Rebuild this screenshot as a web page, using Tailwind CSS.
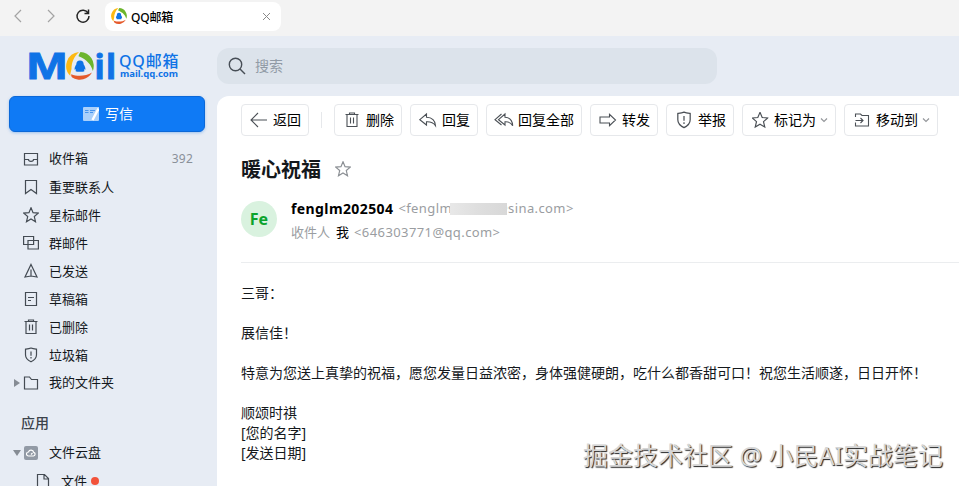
<!DOCTYPE html>
<html lang="zh-CN">
<head>
    <meta charset="UTF-8">
    <meta name="viewport" content="width=device-width, initial-scale=1.0">
    <title>QQ邮箱</title>
    <script src="https://cdn.jsdelivr.net/npm/@tailwindcss/browser@4"></script>
</head>
<body class="h-screen overflow-hidden bg-[#e7ecf4] font-['Noto_Sans','Noto_Sans_CJK_SC',sans-serif] text-[#14181c]">

    <!-- Shared icons -->
    <svg class="hidden">
        <symbol id="ring" viewBox="0 0 28 28">
            <path fill="#fdb913" d="M13 0A14 14 0 0 0 4.500 24C4 22 5 19.500 5.500 17C5.500 11 7.500 5 13 0Z"/>
            <path fill="#6cb52d" d="M14.500 0A14 14 0 0 1 26.800 19C25.500 13 21 7.500 12.500 4.200C13 2.500 13.500 1.500 14.500 0Z"/>
            <path fill="#e55a2b" d="M26 20.500A14 14 0 0 1 6.200 25.600C5.500 25 5 23.500 5.200 22.200C12 25 20 24 26 20.500Z"/>
            <path fill="#0f73e6" d="M14 8.500C11.500 8.500 10.300 10 10.300 12.600C9.300 14 8.600 15.500 8.600 17.200C8.600 18.200 9.200 18 9.800 17.100C10 18.300 9.600 18.700 9.600 19.200C11 20 17 20 18.400 19.200C18.400 18.700 18 18.300 18.200 17.100C18.800 18 19.400 18.200 19.400 17.200C19.400 15.500 18.700 14 17.700 12.600C17.700 10 16.500 8.500 14 8.500Z"/>
        </symbol>
        <symbol id="star" viewBox="0 0 16 16">
            <path d="M8 .8l2.050 4.850 5.250.45-4 3.450 1.200 5.100L8 11.950l-4.500 2.700 1.200-5.100-4-3.450 5.250-.45z"/>
        </symbol>
        <symbol id="trash" viewBox="0 0 16 16">
            <path d="M1.500 2.500h13M5.500 2.500v-1.500h5v1.500M3 2.500v12h10v-12M6.500 5.500v6M9.500 5.500v6"/>
        </symbol>
        <symbol id="shield" viewBox="0 0 16 16">
            <path d="M8 1c2 .8 4 1 5.500 1.200v5.500c0 3.300-2.300 5.500-5.500 7.100-3.200-1.600-5.500-3.800-5.500-7.100V2.200C4 2 6 1.800 8 1zM8 4.500v4.200M8 10v1.500"/>
        </symbol>
    </svg>

    <!-- Browser bar -->
    <div class="h-9 bg-[#f3f3f3] flex items-start">
        <div class="flex w-[105px] h-8 items-center pl-2.5 gap-[17px]">
            <svg class="w-4 h-4" viewBox="0 0 16 16" fill="none" stroke="#a3a3a3" stroke-width="1.200"><path d="M11 2L5 8l6 6"/></svg>
            <svg class="w-4 h-4" viewBox="0 0 16 16" fill="none" stroke="#a3a3a3" stroke-width="1.200"><path d="M5 2l6 6-6 6"/></svg>
            <svg class="w-4 h-4 -ml-px" viewBox="0 0 16 16" fill="none" stroke="#222" stroke-width="1.500"><path d="M13.200 5.200A6 6 0 1 0 14 8M13.500 1.500v4h-4"/></svg>
        </div>
        <div class="mt-0.5 w-44 h-[29px] bg-white rounded-lg flex items-center pl-1.5 pr-2.5">
            <svg class="w-4 h-4 -mt-0.5"><use href="#ring"/></svg>
            <span class="ml-1 text-xs font-medium text-black tracking-[-0.2px] pt-0.5">QQ邮箱</span>
            <svg class="ml-auto w-[9px] h-[9px]" viewBox="0 0 9 9" stroke="#8a8a8a" stroke-width="1"><path d="M1 1l7 7M8 1L1 8"/></svg>
        </div>
    </div>

    <div class="flex h-[450px]">
        <!-- Sidebar -->
        <aside class="w-[217px] shrink-0">
            <div class="h-[60px] pl-7 pt-3.5 flex text-[#0f73e6]">
                <svg class="w-[91px] h-8 overflow-visible" viewBox="0 0 91 32" fill="#0f73e6" stroke="#0f73e6" stroke-width=".8">
                    <text x="-1.500" y="29" font-family="Liberation Sans" font-weight="bold" font-size="36" textLength="41" lengthAdjust="spacingAndGlyphs">M</text>
                    <use href="#ring" x="38" y="2" width="28" height="28" stroke="none"/>
                    <text x="66.500 78" y="29" font-family="Noto Sans" font-weight="bold" font-size="34">il</text>
                </svg>
                <div class="pt-[3px] whitespace-nowrap">
                    <div class="text-base leading-4 font-medium tracking-[0.8px]">QQ邮箱</div>
                    <div class="ml-[1px] text-[9.500px] leading-[10px] font-bold">mail.qq.com</div>
                </div>
            </div>
            <div class="ml-[9px] w-[196px] h-9 rounded-md bg-[#0f7af5] border border-[#0b68d8] shadow-[0_1px_3px_rgba(15,115,230,0.35)] flex items-center justify-center gap-1.5 pl-0.5 text-sm text-white">
                <svg class="w-4 h-4" viewBox="0 0 16 16">
                    <path fill="#a9d0fb" d="M1 1h15v13a1 1 0 0 1-1 1H1a1 1 0 0 1-1-1V2a1 1 0 0 1 1-1z"/>
                    <path stroke="#4795ee" d="M2 4.500h3.500M2 6.500h3.500M7 4.500h5M7 6.500h3"/>
                    <path stroke="#fff" stroke-width="2.400" d="M15.500 2.500L9.500 14"/>
                </svg>
                <span>写信</span>
            </div>

            <nav class="pt-[13px] text-[13px] [&_svg]:w-4 [&_svg]:h-4 [&_svg]:shrink-0 [&_svg]:fill-none [&_svg]:stroke-[#444b53] [&_svg]:stroke-[1.2]">
                <div class="flex items-center h-7 pl-[23px] gap-2.5">
                    <svg viewBox="0 0 16 16"><path d="M1.500 2.500h13v11.500h-13zM1.500 8.500h4c0 2.500 5 2.500 5 0h4"/></svg>
                    <span>收件箱</span>
                    <span class="ml-auto mr-6 text-[#8a9099] text-xs tracking-[0.2px]">392</span>
                </div>
                <div class="flex items-center h-7 pl-[23px] gap-2.5">
                    <svg viewBox="0 0 16 16"><path d="M2.500 1.500h11v13L8 10.500l-5.500 4z"/></svg>
                    <span class="pt-px">重要联系人</span>
                </div>
                <div class="flex items-center h-7 pl-[23px] gap-2.5">
                    <svg><use href="#star"/></svg>
                    <span class="pt-px">星标邮件</span>
                </div>
                <div class="flex items-center h-7 pl-[23px] gap-2.5">
                    <svg viewBox="0 0 16 16"><path d="M.6 1.500h10v8h-10zM5 5.500h10.400v8.500H5z"/></svg>
                    <span class="pt-px">群邮件</span>
                </div>
                <div class="flex items-center h-7 pl-[23px] gap-2.5">
                    <svg viewBox="0 0 16 16"><path d="M8 1.500l6 12.500-6-1-6 1zM8 6.500v6.500"/></svg>
                    <span class="pt-px">已发送</span>
                </div>
                <div class="flex items-center h-7 pl-[23px] gap-2.5">
                    <svg viewBox="0 0 16 16"><path d="M2.500 1.500h11v13h-11zM5 6.500h6M5 9.500h3"/></svg>
                    <span class="pt-px">草稿箱</span>
                </div>
                <div class="flex items-center h-7 pl-[23px] gap-2.5">
                    <svg><use href="#trash"/></svg>
                    <span class="pt-px">已删除</span>
                </div>
                <div class="flex items-center h-7 pl-[23px] gap-2.5">
                    <svg><use href="#shield"/></svg>
                    <span class="pt-px">垃圾箱</span>
                </div>
                <div class="flex items-center h-7 pl-3.5">
                    <span class="w-0 h-0 mr-[3px] border-y-4 border-y-transparent border-l-[6px] border-l-[#868c94]"></span>
                    <svg viewBox="0 0 16 16"><path d="M1.500 2h5l2 2.500h6V14h-13z"/></svg>
                    <span class="ml-2.5">我的文件夹</span>
                </div>
                <div class="mt-3 h-7 leading-7 pl-[21px] text-sm font-medium text-[#3c434b]">应用</div>
                <div class="flex items-center h-7 mt-0.5 pl-[13px]">
                    <span class="w-0 h-0 mr-0.5 border-x-4 border-x-transparent border-t-[6px] border-t-[#868c94]"></span>
                    <span class="w-3.5 h-3.5 m-[1px] rounded-xs bg-[#929aa5] flex items-center justify-center">
                        <svg class="!w-2.5 !h-2.5 !stroke-white" viewBox="0 0 10 10"><path d="M2.500 8a2 2 0 0 1 0-4 2.700 2.700 0 0 1 5.200.3A1.900 1.900 0 0 1 7.500 8zM5 6.500L6.500 5"/></svg>
                    </span>
                    <span class="ml-2.5">文件云盘</span>
                </div>
                <div class="flex items-center h-7 pl-[35px] gap-2.5">
                    <svg viewBox="0 0 16 16"><path d="M2.500 1.500h7l4 4v9h-11zM9 1.500v4.500h4.500"/></svg>
                    <span class="leading-3">文件</span>
                    <span class="w-2 h-2 -ml-1.5 rounded-full bg-[#f2523a]"></span>
                </div>
            </nav>
        </aside>

        <main class="flex-1 min-w-0 flex flex-col">
            <div class="mt-3 w-[500px] h-9 rounded-xl bg-[#dce3eb] flex items-center pl-[11px] gap-[9px] text-sm text-[#919ba6]">
                <svg class="w-[18px] h-[18px]" viewBox="0 0 18 18" fill="none" stroke="#474e56" stroke-width="1.400"><circle cx="7.500" cy="7.500" r="6.200"/><path d="M12 12l5 5"/></svg>
                <span>搜索</span>
            </div>

            <section class="mt-3 flex-1 bg-white rounded-tl-xl pl-6 pt-2">
                <!-- Toolbar -->
                <div class="flex gap-2 text-sm text-black whitespace-nowrap [&>button]:h-8 [&>button]:px-[7px] [&>button]:flex [&>button]:items-center [&>button]:gap-1 [&>button]:border [&>button]:border-[#e6e8eb] [&>button]:rounded [&_svg]:fill-none [&_svg]:stroke-[#4b5056] [&_svg]:stroke-[1.1]">
                    <button>
                        <svg class="w-5 h-5" viewBox="0 0 20 20"><path d="M18 10H2M9 3l-7 7 7 7"/></svg>
                        <span>返回</span>
                    </button>
                    <div class="w-px h-4 mt-2 mx-1 bg-[#e6e8eb]"></div>
                    <button>
                        <svg class="w-5 h-5 p-[2px]"><use href="#trash"/></svg>
                        <span>删除</span>
                    </button>
                    <button>
                        <svg class="w-5 h-5" viewBox="0 0 20 20"><path d="M8.500 4L1.800 9.700l6.700 5.300v-3.200c4.500-.2 7 .9 9 4-.3-5.300-3.700-8.300-9-8.500z"/></svg>
                        <span>回复</span>
                    </button>
                    <button>
                        <svg class="w-5 h-5" viewBox="0 0 20 20"><path d="M7.500 4L1 9.700 7.500 15M11 4L4.500 9.700 11 15v-3.200c3.500-.2 6 .9 7.700 4-.3-5.300-3.400-8.300-7.700-8.500z"/></svg>
                        <span>回复全部</span>
                    </button>
                    <button>
                        <svg class="w-5 h-5" viewBox="0 0 20 20"><path d="M2 7h9.500V4.300l6 5.700-6 5.700V13H2z"/></svg>
                        <span>转发</span>
                    </button>
                    <button>
                        <svg class="w-5 h-5 p-[1px]"><use href="#shield"/></svg>
                        <span>举报</span>
                    </button>
                    <button>
                        <svg class="w-5 h-5 p-[1.5px]"><use href="#star"/></svg>
                        <span>标记为</span>
                        <svg class="w-2 h-2 opacity-60" viewBox="0 0 8 8"><path d="M1 2.500l3 3 3-3"/></svg>
                    </button>
                    <button>
                        <svg class="w-5 h-5" viewBox="0 0 20 20"><path d="M3.500 7V4h5l1.500 1.500h6.500V16h-13v-3.500M3.500 10.500h7.500M8.500 8l2.500 2.500L8.500 13"/></svg>
                        <span>移动到</span>
                        <svg class="w-2 h-2 opacity-60" viewBox="0 0 8 8"><path d="M1 2.500l3 3 3-3"/></svg>
                    </button>
                </div>

                <!-- Mail header -->
                <div class="flex items-center h-7 mt-5 gap-3.5">
                    <h1 class="text-xl font-bold">暖心祝福</h1>
                    <svg class="w-4 h-4 -mt-0.5 fill-none stroke-[#8b8f94] stroke-[1.2]"><use href="#star"/></svg>
                </div>
                <div class="flex mt-3.5 h-[65px] border-b border-[#ebedef] whitespace-nowrap">
                    <div class="w-9 h-9 mt-[3px] mr-3.5 rounded-full bg-[#d9f2df] text-[#0ba32c] font-bold flex items-center justify-center">Fe</div>
                    <div class="text-[13px] text-[#9a9da1]">
                        <div class="flex items-center h-[22px] tracking-[0.4px]">
                            <span class="text-sm font-bold text-black mr-[5px] tracking-[0.4px]">fenglm202504</span>
                            <span>&lt;fenglm</span>
                            <span class="w-[57px] h-3 -ml-0.5 -mr-[11px] z-10 bg-linear-to-r from-[#e8e8e8] via-[#dedede] to-[#d8d8d8]"></span>
                            <span>@sina.com&gt;</span>
                        </div>
                        <div class="flex items-center h-[26px]">
                            <span>收件人</span>
                            <span class="ml-1.5 mr-[5px] text-black">我</span>
                            <span class="tracking-[0.4px]">&lt;646303771@qq.com&gt;</span>
                        </div>
                    </div>
                </div>

                <!-- Mail body -->
                <div class="pt-5 text-sm leading-5 whitespace-nowrap">
                    <p>三哥：</p>
                    <p class="mt-5">展信佳！</p>
                    <p class="mt-5">特意为您送上真挚的祝福，愿您发量日益浓密，身体强健硬朗，吃什么都香甜可口！祝您生活顺遂，日日开怀！</p>
                    <p class="mt-5">顺颂时祺</p>
                    <p>[您的名字]</p>
                    <p>[发送日期]</p>
                </div>
            </section>
        </main>
    </div>

    <div class="absolute left-[583px] top-[437px] text-[25px] leading-9 whitespace-nowrap text-[#d6d6d6] [text-shadow:1px_1px_1px_#222]">掘金技术社区 @ 小民AI实战笔记</div>
</body>
</html>
